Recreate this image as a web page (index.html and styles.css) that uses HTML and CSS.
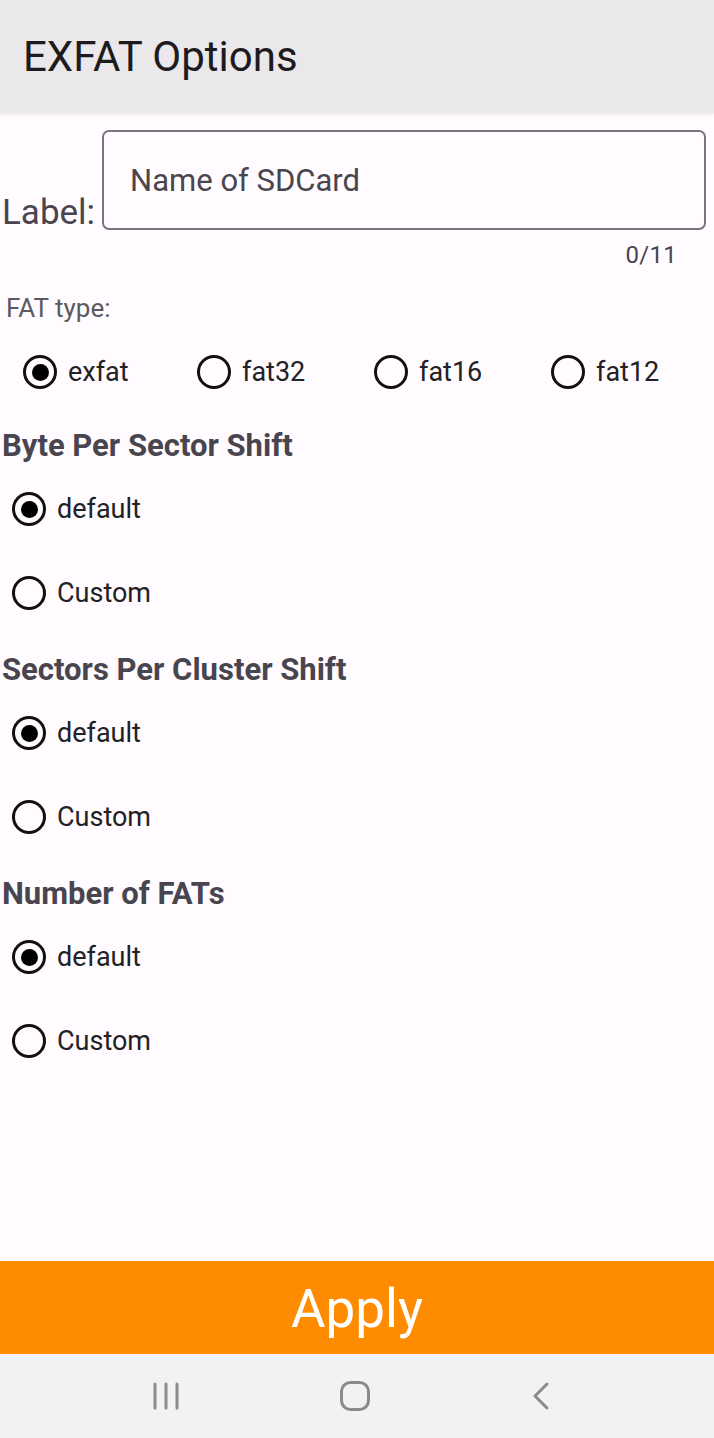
FILE: index.html
```html
<!DOCTYPE html>
<html>
<head>
<meta charset="utf-8">
<link rel="stylesheet" href="styles.css">
</head>
<body>
<div class="screen">
  <header class="appbar"><h1 class="title">EXFAT Options</h1></header>
  <main class="content">
    <div class="label-row">
      <span class="label-text">Label:</span>
      <div class="field"><span class="placeholder">Name of SDCard</span></div>
    </div>
    <div class="counter">0/11</div>
    <div class="fat-caption">FAT type:</div>
    <div class="fat-row">
      <div class="fat-opt"><span class="radio checked"></span><span class="opt-text">exfat</span></div>
      <div class="fat-opt"><span class="radio"></span><span class="opt-text">fat32</span></div>
      <div class="fat-opt"><span class="radio"></span><span class="opt-text">fat16</span></div>
      <div class="fat-opt"><span class="radio"></span><span class="opt-text">fat12</span></div>
    </div>
    <section class="group">
      <h2 class="group-title">Byte Per Sector Shift</h2>
      <div class="opt"><span class="radio checked"></span><span class="opt-text">default</span></div>
      <div class="opt"><span class="radio"></span><span class="opt-text">Custom</span></div>
    </section>
    <section class="group">
      <h2 class="group-title">Sectors Per Cluster Shift</h2>
      <div class="opt"><span class="radio checked"></span><span class="opt-text">default</span></div>
      <div class="opt"><span class="radio"></span><span class="opt-text">Custom</span></div>
    </section>
    <section class="group">
      <h2 class="group-title">Number of FATs</h2>
      <div class="opt"><span class="radio checked"></span><span class="opt-text">default</span></div>
      <div class="opt"><span class="radio"></span><span class="opt-text">Custom</span></div>
    </section>
  </main>
  <button class="apply">Apply</button>
  <nav class="navbar">
    <svg class="nav-icon" width="30" height="30" viewBox="0 0 30 30"><g stroke="#8b8b8b" stroke-width="3" stroke-linecap="round"><line x1="4" y1="3" x2="4" y2="27"/><line x1="15" y1="3" x2="15" y2="27"/><line x1="26" y1="3" x2="26" y2="27"/></g></svg>
    <svg class="nav-icon" width="32" height="32" viewBox="0 0 32 32"><rect x="2.5" y="2.5" width="27" height="27" rx="9" fill="none" stroke="#8b8b8b" stroke-width="3"/></svg>
    <svg class="nav-icon" width="22" height="30" viewBox="0 0 22 30"><polyline points="18,3 6,15 18,27" fill="none" stroke="#8b8b8b" stroke-width="3" stroke-linecap="round" stroke-linejoin="round"/></svg>
  </nav>
</div>
</body>
</html>
```

FILE: styles.css
```css
* { box-sizing: border-box; }
html, body { margin: 0; padding: 0; }
body { font-family: Roboto, "Noto Sans", sans-serif; background: #fffbfe; }
.screen { width: 714px; height: 1438px; display: flex; flex-direction: column; background: #fffbfe; }
.appbar { height: 113px; background: #ebe8eb; display: flex; align-items: center; padding-left: 23px; box-shadow: 0 2px 4px rgba(0,0,0,0.08); position: relative; z-index: 1; }
.title { margin: 0; font-weight: 400; font-size: 42px; color: #1d1b20; letter-spacing: 0; }
.content { flex: 1; padding-top: 17px; }
.label-row { display: flex; align-items: flex-end; padding-left: 2px; padding-right: 8px; }
.label-text { font-size: 35px; color: #49454f; line-height: 1; margin-right: 7px; padding-bottom: 0; }
.field { flex: 1; height: 100px; border: 2px solid #79747e; border-radius: 7px; display: flex; align-items: center; padding-left: 26px; }
.placeholder { font-size: 31px; color: #49454f; }
.counter { text-align: right; padding-right: 37px; font-size: 24px; color: #49454f; height: 50px; line-height: 50px; letter-spacing: 0.3px; }
.fat-caption { padding-left: 6px; font-size: 26px; color: #5c5960; height: 40px; line-height: 40px; margin-top: 8px; }
.fat-row { display: grid; grid-template-columns: 174px 177px 177px 177px; padding-left: 23px; height: 78px; align-items: center; margin-top: 5px; }
.fat-opt { display: flex; align-items: center; }
.radio { width: 34px; height: 34px; border: 3.5px solid #111; border-radius: 50%; display: inline-flex; align-items: center; justify-content: center; flex: none; }
.radio.checked::after { content: ""; width: 17px; height: 17px; border-radius: 50%; background: #000; }
.opt-text { font-size: 27px; color: #222125; margin-left: 11px; }
.group { display: flex; flex-direction: column; }
.group-title { margin: 0; padding-left: 2px; padding-top: 14px; font-size: 31px; font-weight: 700; color: #49454f; height: 56px; line-height: 42px; }
.opt { display: flex; align-items: center; height: 84px; padding-left: 12px; }
.apply { height: 93px; border: 0; margin: 0; background: #ff8b00; color: #fff; font-family: Roboto, sans-serif; font-size: 53px; padding: 3px 0 0; width: 100%; }
.navbar { height: 84px; background: #f2f2f2; display: flex; align-items: center; justify-content: space-between; padding: 0 163px 0 151px; }
.nav-icon { display: block; }
```
